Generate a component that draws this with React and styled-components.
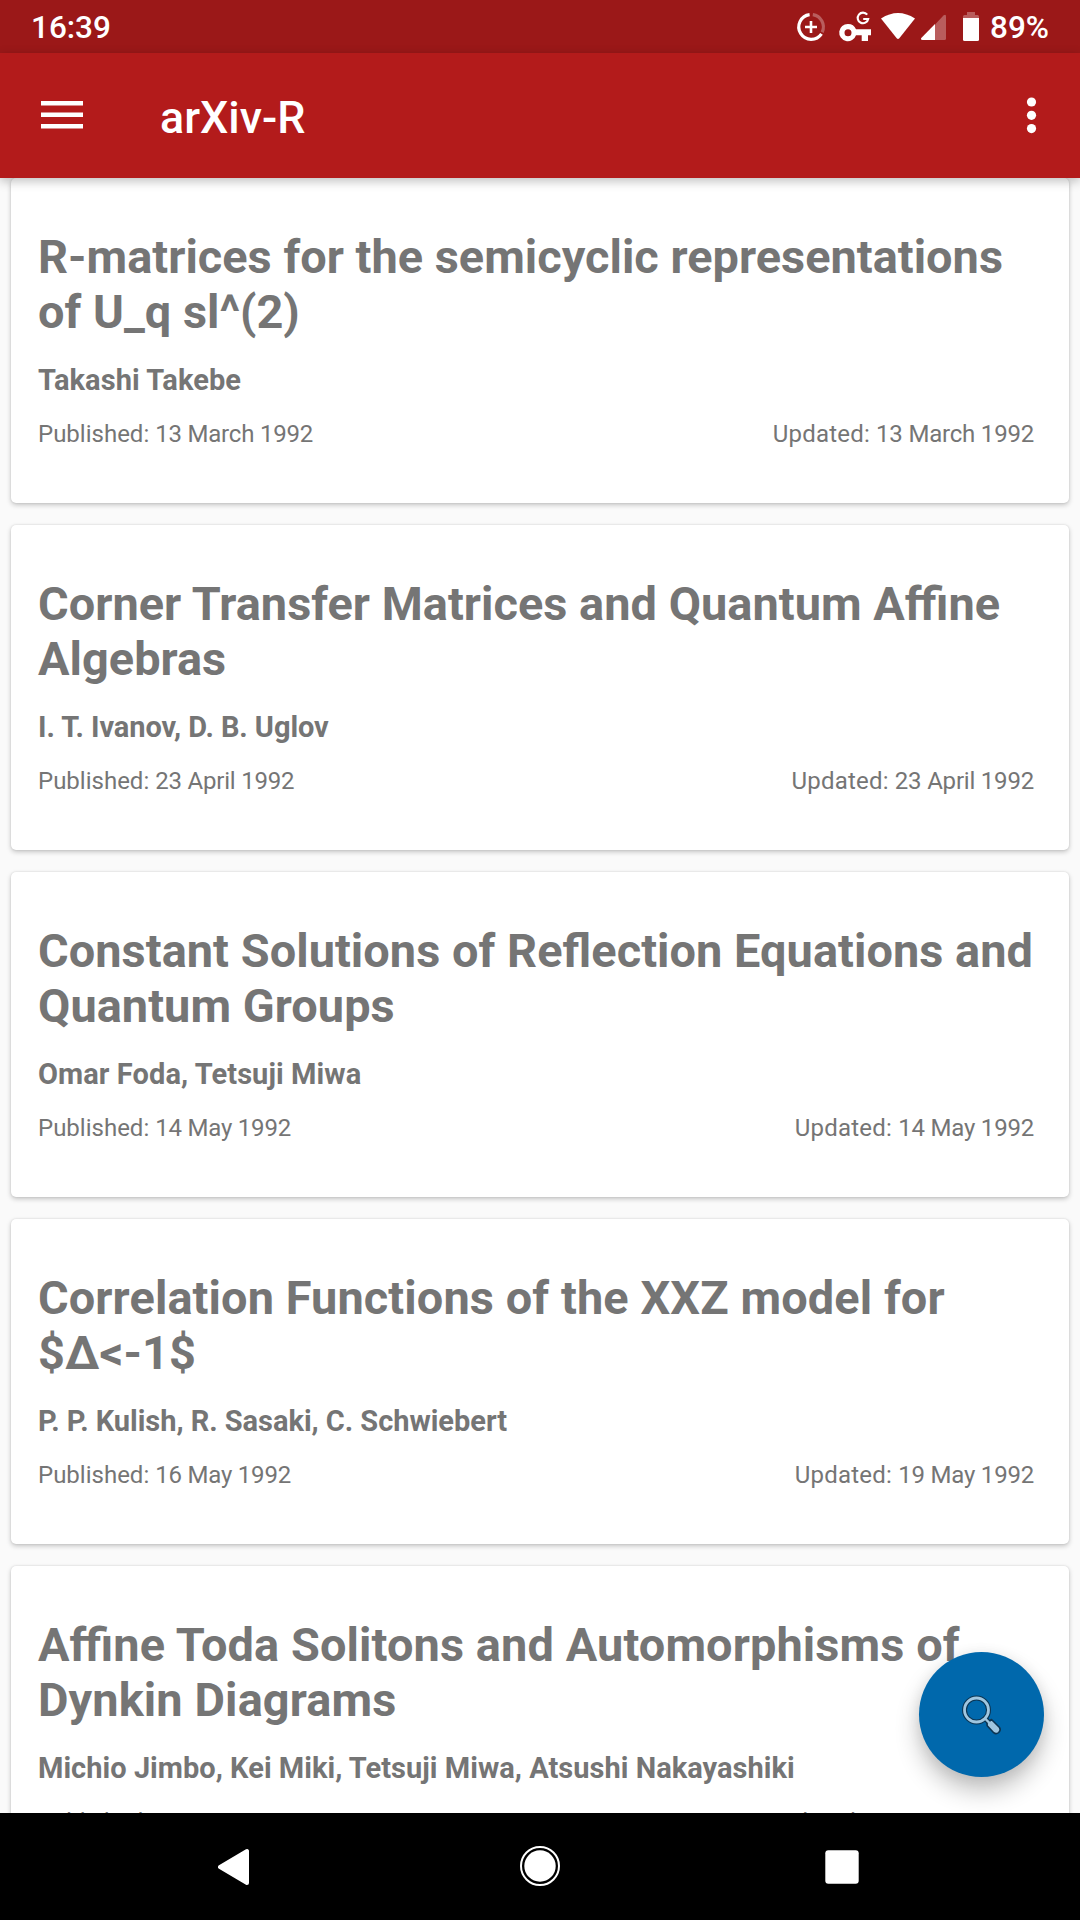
import React from "react";
import styled, { createGlobalStyle } from "styled-components";

const GlobalStyle = createGlobalStyle`
  * { box-sizing: border-box; }
  body { margin: 0; background: #fafafa; font-family: Roboto, "Liberation Sans", sans-serif; }
`;

const Screen = styled.div`
  position: relative;
  display: flex;
  flex-direction: column;
  width: 1080px;
  height: 1920px;
  overflow: hidden;
  background: #fafafa;
`;

const StatusBar = styled.header`
  display: flex;
  align-items: center;
  justify-content: space-between;
  flex: none;
  height: 53px;
  padding: 0 31px;
  background: #9b1818;
  z-index: 2;
`;

const StatusText = styled.span`
  padding-top: 1px;
  color: #fff;
  font-size: 31.5px;
  font-weight: 500;
  line-height: 53px;
`;

const StatusIcons = styled.div`
  display: flex;
  align-items: center;
`;

const StatusGlyphs = styled.svg`
  display: block;
  width: 200px;
  height: 53px;
`;

const AppBar = styled.nav`
  display: flex;
  align-items: center;
  flex: none;
  height: 125px;
  padding: 0 38px 0 41px;
  background: #b31b1b;
  box-shadow: 0 3px 10px rgba(0, 0, 0, 0.26);
  z-index: 2;
`;

const IconButton = styled.button`
  display: flex;
  padding: 0;
  border: 0;
  background: none;
`;

const AppTitle = styled.h1`
  flex: 1;
  margin: 0 0 0 77px;
  padding-top: 4px;
  color: #fff;
  font-size: 44.8px;
  font-weight: 500;
  line-height: 52px;
`;

const List = styled.main`
  display: flex;
  flex-direction: column;
  flex: 1;
  gap: 22px;
  min-height: 0;
  padding: 0 11px;
  overflow: hidden;
`;

const Card = styled.article`
  flex: none;
  height: 325px;
  padding: 51px 35px 0 27px;
  border-radius: 5px;
  background: #fff;
  box-shadow: 0 2px 5px rgba(0, 0, 0, 0.22), 0 0 2px rgba(0, 0, 0, 0.12);
  color: #757575;
`;

const Title = styled.h2`
  margin: 0;
  font-size: 46.9px;
  font-weight: 700;
  line-height: 55px;
  letter-spacing: ${(p) => p.$tracking}px;
  white-space: nowrap;
`;

const Authors = styled.p`
  margin: 24px 0 0;
  font-size: 29px;
  font-weight: 700;
  line-height: 34px;
  letter-spacing: ${(p) => p.$tracking}px;
  white-space: nowrap;
`;

const Dates = styled.div`
  display: flex;
  justify-content: space-between;
  margin-top: 23px;
  font-size: 24px;
  line-height: 28px;
`;

const DateLabel = styled.span`
  letter-spacing: ${(p) => p.$spacing || "0"};
`;

const DateValue = styled.span`
  letter-spacing: -0.2px;
`;

const SearchButton = styled.button`
  position: absolute;
  left: 919px;
  top: 1652px;
  width: 125px;
  height: 125px;
  padding: 0;
  border: 0;
  border-radius: 50%;
  background: #0068ac;
  box-shadow: 0 14px 24px rgba(0, 0, 0, 0.24), 0 2px 14px rgba(0, 0, 0, 0.08);
  z-index: 1;
`;

const NavBar = styled.footer`
  display: flex;
  align-items: center;
  justify-content: space-between;
  flex: none;
  height: 107px;
  padding: 0 221px 0 218px;
  background: #000;
  z-index: 2;
`;

const HomeIcon = styled.svg`
  margin: 0 0 1px 5px;
`;

const papers = [
  { title: ["R-matrices for the semicyclic representations", "of U_q sl^(2)"], authors: "Takashi Takebe", published: "13 March 1992", updated: "13 March 1992", tracking: [0.02, 0.09] },
  { title: ["Corner Transfer Matrices and Quantum Affine", "Algebras"], authors: "I. T. Ivanov, D. B. Uglov", published: "23 April 1992", updated: "23 April 1992", tracking: [0.03, -0.07] },
  { title: ["Constant Solutions of Reflection Equations and", "Quantum Groups"], authors: "Omar Foda, Tetsuji Miwa", published: "14 May 1992", updated: "14 May 1992", tracking: [0.05, 0.08] },
  { title: ["Correlation Functions of the XXZ model for", "$Δ<-1$"], authors: "P. P. Kulish, R. Sasaki, C. Schwiebert", published: "16 May 1992", updated: "19 May 1992", tracking: [0.1, -0.03] },
  { title: ["Affine Toda Solitons and Automorphisms of", "Dynkin Diagrams"], authors: "Michio Jimbo, Kei Miki, Tetsuji Miwa, Atsushi Nakayashiki", published: "23 August 1992", updated: "23 August 1992", tracking: [0.11, 0.03] },
];

// A non-zero letter-spacing switches ligatures off, so they are requested again here.
const Ligatures = styled.div`
  font-feature-settings: "liga" 1, "kern" 1;
`;

function PaperCard({ paper }) {
  return (
    <Card>
      <Ligatures>
        <Title $tracking={paper.tracking[0]}>{paper.title[0]}<br />{paper.title[1]}</Title>
        <Authors $tracking={paper.tracking[1]}>{paper.authors}</Authors>
      </Ligatures>
      <Dates>
        <span><DateLabel>Published: </DateLabel><DateValue>{paper.published}</DateValue></span>
        <span><DateLabel $spacing="0.2px">Updated: </DateLabel><DateValue>{paper.updated}</DateValue></span>
      </Dates>
    </Card>
  );
}

function StatusSymbols() {
  return (
    <StatusGlyphs viewBox="790 0 200 53" fill="none">
      <g stroke="#fff" strokeWidth="3.2">
        <path d="M809.6 14.6A12.4 12.4 0 1 0 821.5 33.8" />
        <path d="M812.8 14.7A12.4 12.4 0 0 1 822.2 32.2" strokeOpacity="0.3" />
        <path d="M811 21v12M805 27h12" strokeWidth="2.6" />
      </g>
      <path fill="#fff" fillRule="evenodd" d="M848 24a8.6 8.6 0 0 1 8 5.2H871v6h-3V41h-6.3v-5.8H856A8.6 8.6 0 1 1 848 24zm0 5.2a3.5 3.5 0 1 0 0 7 3.5 3.5 0 0 0 0-7z" />
      <path stroke="#fff" strokeWidth="2.1" d="M867.2 14.7a5.3 5.3 0 1 0 1 4.3h-5" />
      <path fill="#fff" d="M881 18.5Q898 7.5 915 18.5L899.3 38.3Q898 39.6 896.7 38.3z" />
      <path fill="#fff" fillOpacity="0.3" d="M946 16.5V38.5Q946 40 944.5 40H935V24.5L943.5 15.6Q946 13.5 946 16.5z" />
      <path fill="#fff" d="M935 24v16h-12.5Q920 39.5 921.5 37.7z" />
      <path fill="#fff" fillOpacity="0.3" d="M963 18v-1.5Q963 15 964.5 15H967v-3h8v3h2.5Q979 15 979 16.5V18z" />
      <path fill="#fff" d="M963 18h16v21.5q0 1.5-1.5 1.5h-13q-1.5 0-1.5-1.5z" />
    </StatusGlyphs>
  );
}

export default function App() {
  return (
    <>
      <GlobalStyle />
      <Screen>
        <StatusBar>
          <StatusText>16:39</StatusText>
          <StatusIcons>
            <StatusSymbols />
            <StatusText>89%</StatusText>
          </StatusIcons>
        </StatusBar>
        <AppBar>
          <IconButton aria-label="Menu">
            <svg width="42" height="29" viewBox="0 0 42 29" fill="#fff">
              <path d="M0 0h42v4.6H0zM0 11.4h42V16H0zM0 23h42v4.6H0z" />
            </svg>
          </IconButton>
          <AppTitle>arXiv-R</AppTitle>
          <IconButton aria-label="More">
            <svg width="22" height="39" viewBox="0 0 22 39" fill="#fff">
              <circle cx="11.5" cy="6" r="4.6" />
              <circle cx="11.5" cy="19.3" r="4.6" />
              <circle cx="11.5" cy="32.6" r="4.6" />
            </svg>
          </IconButton>
        </AppBar>
        <List>
          {papers.map((p) => <PaperCard key={p.title[0]} paper={p} />)}
        </List>
        <SearchButton aria-label="Search">
          <svg width="125" height="125" viewBox="0 0 125 125" fill="none">
            <g strokeLinecap="round" strokeLinejoin="round">
              <circle cx="57.5" cy="58" r="12" stroke="#0b3553" strokeWidth="5" />
              <path d="M66 66.5l4 4" stroke="#0b3553" strokeWidth="5" />
              <path d="M68 71l4.500-3.500 8 8q1.800 2.500-.8 5-2.700 2.200-5 .2l-6.500-7z" fill="#9fc6e0" stroke="#0b3553" strokeWidth="1.6" />
              <circle cx="57.5" cy="58" r="12" stroke="#9fc6e0" strokeWidth="2.8" />
              <path d="M66 66.500l4.500 4.500" stroke="#9fc6e0" strokeWidth="2.4" />
            </g>
          </svg>
        </SearchButton>
        <NavBar>
          <svg width="32" height="38" viewBox="0 0 32 38">
            <path d="M2 19L29 3v32z" fill="#fff" stroke="#fff" strokeWidth="4" strokeLinejoin="round" />
          </svg>
          <HomeIcon width="40" height="40" viewBox="0 0 40 40">
            <circle cx="20" cy="20" r="19" fill="none" stroke="#fff" strokeWidth="2" />
            <circle cx="20" cy="20" r="15.7" fill="#fff" />
          </HomeIcon>
          <svg width="34" height="34" viewBox="0 0 34 34">
            <rect x="0.3" y="0.3" width="33.4" height="33.4" rx="3" fill="#fff" />
          </svg>
        </NavBar>
      </Screen>
    </>
  );
}
